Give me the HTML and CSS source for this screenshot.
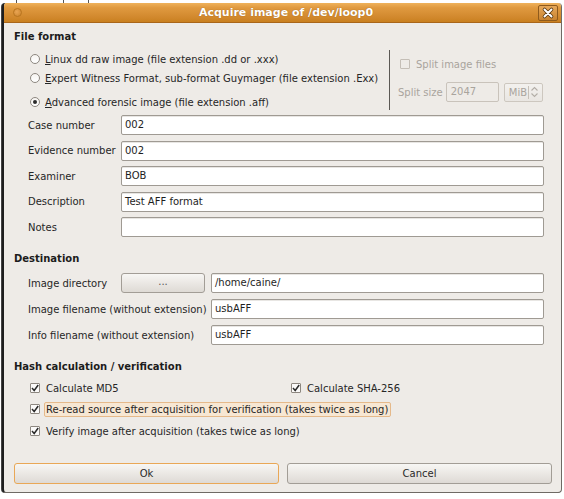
FILE: index.html
```html
<!DOCTYPE html>
<html>
<head>
<meta charset="utf-8">
<link rel="stylesheet" href="styles.css">
</head>
<body>
<div class="desk-top"><span class="tick t1"></span><span class="tick t2"></span><span class="tick t3"></span></div>
<div class="window">
  <div class="titlebar">
    <span class="dot"></span>
    <span class="title">Acquire image of /dev/loop0</span>
    <span class="close">
      <svg width="20" height="16" viewBox="0 0 20 16">
        <path d="M6.5 4.5 L13.5 11.5 M13.5 4.5 L6.5 11.5" stroke="#5a3a12" stroke-width="3.6" stroke-linecap="round"/>
        <path d="M6.5 4.5 L13.5 11.5 M13.5 4.5 L6.5 11.5" stroke="#ffffff" stroke-width="2" stroke-linecap="round"/>
      </svg>
    </span>
  </div>
  <div class="content">
    <div class="heading h-file">File format</div>
    <div class="format">
      <div class="radios">
        <div class="radio r1"><span class="rb"></span><span><u>L</u>inux dd raw image (file extension .dd or .xxx)</span></div>
        <div class="radio r2"><span class="rb"></span><span><u>E</u>xpert Witness Format, sub-format Guymager (file extension .Exx)</span></div>
        <div class="radio r3"><span class="rb on"></span><span><u>A</u>dvanced forensic image (file extension .aff)</span></div>
      </div>
      <div class="vsep"></div>
      <div class="split">
        <div class="split-check"><span class="cb disabled"></span><span>Split image files</span></div>
        <div class="split-size">
          <span>Split size</span>
          <span class="dis-input">2047</span>
          <span class="combo"><span class="combo-text">MiB</span><span class="combo-sep"></span>
            <svg width="9" height="12" viewBox="0 0 9 12"><path d="M1.5 4.5 L4.5 1.5 L7.5 4.5 M1.5 7.5 L4.5 10.5 L7.5 7.5" fill="none" stroke="#b3aea7" stroke-width="1.1"/></svg>
          </span>
        </div>
      </div>
    </div>
    <div class="fields">
      <span class="lbl">Case number</span><span class="input">002</span>
      <span class="lbl">Evidence number</span><span class="input">002</span>
      <span class="lbl">Examiner</span><span class="input">BOB</span>
      <span class="lbl">Description</span><span class="input">Test AFF format</span>
      <span class="lbl">Notes</span><span class="input"></span>
    </div>
    <div class="heading h-dest">Destination</div>
    <div class="dest">
      <div class="dest-row">
        <span class="dlbl-short">Image directory</span>
        <span class="btn small">...</span>
        <span class="input grow">/home/caine/</span>
      </div>
      <div class="dest-row">
        <span class="dlbl">Image filename (without extension)</span>
        <span class="input grow">usbAFF</span>
      </div>
      <div class="dest-row">
        <span class="dlbl">Info filename (without extension)</span>
        <span class="input grow">usbAFF</span>
      </div>
    </div>
    <div class="heading h-hash">Hash calculation / verification</div>
    <div class="hash">
      <div class="check"><span class="cb on"><svg width="10" height="10" viewBox="0 0 10 10"><path d="M2 5 L4.2 7.5 L8.2 2" fill="none" stroke="#2a2a2a" stroke-width="1.5"/></svg></span><span>Calculate MD5</span></div>
      <div class="check col2"><span class="cb on"><svg width="10" height="10" viewBox="0 0 10 10"><path d="M2 5 L4.2 7.5 L8.2 2" fill="none" stroke="#2a2a2a" stroke-width="1.5"/></svg></span><span>Calculate SHA-256</span></div>
      <div class="check wide r-reread"><span class="cb on"><svg width="10" height="10" viewBox="0 0 10 10"><path d="M2 5 L4.2 7.5 L8.2 2" fill="none" stroke="#2a2a2a" stroke-width="1.5"/></svg></span><span class="focus">Re-read source after acquisition for verification (takes twice as long)</span></div>
      <div class="check wide r-verify"><span class="cb on"><svg width="10" height="10" viewBox="0 0 10 10"><path d="M2 5 L4.2 7.5 L8.2 2" fill="none" stroke="#2a2a2a" stroke-width="1.5"/></svg></span><span>Verify image after acquisition (takes twice as long)</span></div>
    </div>
    <div class="buttons">
      <span class="btn big default">Ok</span>
      <span class="btn big">Cancel</span>
    </div>
  </div>
</div>
</body>
</html>
```

FILE: styles.css
```css
html, body {
  margin: 0;
  padding: 0;
  background: #ffffff;
}
body {
  width: 564px;
  height: 499px;
  overflow: hidden;
  font-family: "DejaVu Sans", sans-serif;
  font-size: 10px;
  color: #262626;
}
.desk-top {
  height: 3px;
  display: flex;
}
.tick {
  width: 1px;
  height: 3px;
  background: #555;
}
.t1 { margin-left: 16px; }
.t2 { margin-left: 46px; }
.t3 { margin-left: 24px; }

.window {
  margin-left: 2px;
  width: 557px;
  height: 489px;
  border: 1px solid #6f6a64;
  border-left: 2px solid #1e1e1e;
  border-top: none;
  border-radius: 4px;
  background: #eeebe7;
  overflow: hidden;
  box-shadow: -1px 0 0 #444;
}
.titlebar {
  height: 20px;
  display: flex;
  align-items: center;
  background: linear-gradient(#efb25c 0%, #e09a40 25%, #d38a2f 70%, #c98020 100%);
  border-bottom: 1px solid #a9661a;
  box-sizing: border-box;
  padding: 0 2px 0 9px;
}
.dot {
  width: 9px;
  height: 9px;
  border-radius: 50%;
  background: radial-gradient(circle at 40% 40%, #e9a554, #c9812a);
  border: 1px solid #b8751f;
  box-sizing: border-box;
}
.title {
  flex: 1;
  text-align: center;
  font-weight: bold;
  color: #ffffff;
  text-shadow: 0 0 1px #8a5312;
  font-size: 11px;
  margin-left: 12px;
}
.close {
  width: 20px;
  height: 16px;
  border: 1px solid #8e5a1c;
  border-radius: 2px;
  background: linear-gradient(#e6a85a, #c9832f);
  box-sizing: border-box;
  display: flex;
  align-items: center;
  justify-content: center;
  margin-right: 1px;
}
.close svg { display: block; margin: -1px; }

.content {
  padding: 6px 9px 0 10px;
}
.heading {
  font-weight: bold;
  line-height: 16px;
  height: 16px;
  color: #1c1c1c;
}
.format {
  display: flex;
  height: 65px;
  white-space: nowrap;
}
.radios {
  flex: none;
  width: 359px;
  padding-left: 16px;
}
.radio {
  display: flex;
  align-items: center;
  height: 16px;
  gap: 5px;
}
.r1 { margin-top: 6px; }
.r2 { margin-top: 3px; }
.r3 { margin-top: 8px; }
.rb {
  width: 10px;
  height: 10px;
  border-radius: 50%;
  border: 1px solid #8d8780;
  background: linear-gradient(#f6f4f1, #ffffff);
  box-sizing: border-box;
  display: flex;
  align-items: center;
  justify-content: center;
}
.rb.on::after {
  content: "";
  width: 4px;
  height: 4px;
  border-radius: 50%;
  background: #2b2b2b;
}
u { text-decoration: underline; text-underline-offset: 1px; }
.vsep {
  flex: none;
  width: 1px;
  background: #5b5854;
  margin-top: 5px;
  height: 60px;
}
.split {
  flex: none;
  width: 160px;
  padding-left: 8px;
  color: #a9a49d;
}
.split-check {
  display: flex;
  align-items: center;
  gap: 6px;
  height: 16px;
  margin-top: 11px;
  padding-left: 2px;
}
.split-size {
  display: flex;
  align-items: center;
  margin-top: 10px;
  height: 20px;
}
.dis-input {
  width: 53px;
  height: 20px;
  box-sizing: border-box;
  border: 1px solid #c9c3bb;
  border-radius: 2px;
  margin-left: 3px;
  padding-left: 4px;
  line-height: 18px;
}
.combo {
  width: 39px;
  height: 19px;
  box-sizing: border-box;
  border: 1px solid #cdc7bf;
  border-radius: 2px;
  margin-left: 5px;
  display: flex;
  align-items: center;
  padding-left: 4px;
  background: linear-gradient(#f3f1ee, #e9e6e2);
}
.combo-sep {
  width: 1px;
  height: 13px;
  background: #c6c0b8;
  margin: 0 1px;
}
.cb {
  width: 10px;
  height: 10px;
  border: 1px solid #8d8780;
  border-radius: 1px;
  box-sizing: border-box;
  background: #fbfaf9;
  display: flex;
  align-items: center;
  justify-content: center;
  flex: none;
}
.cb svg { display: block; flex: none; }
.cb.disabled {
  border-color: #c4beb6;
  background: #eeebe7;
}
.fields {
  margin-top: 5px;
  margin-left: 14px;
  margin-right: 8px;
  display: grid;
  grid-template-columns: 93px 1fr;
  row-gap: 5.5px;
  align-items: center;
}
.input {
  height: 20px;
  box-sizing: border-box;
  border: 1px solid #9f9a93;
  border-radius: 2px;
  background: #ffffff;
  padding-left: 3px;
  line-height: 18px;
  color: #1e1e1e;
  box-shadow: inset 0 1px 0 #e8e6e3;
}
.h-dest { margin-top: 14px; }
.dest {
  margin-top: 6px;
  margin-left: 14px;
  margin-right: 8px;
  display: flex;
  flex-direction: column;
  gap: 6px;
}
.dest-row {
  display: flex;
  align-items: center;
}
.dlbl-short { width: 93px; }
.dlbl { width: 183px; }
.grow { flex: 1; }
.btn {
  box-sizing: border-box;
  border: 1px solid #a29d96;
  border-radius: 3px;
  background: linear-gradient(#f7f6f4, #ebe8e4 50%, #dedad5);
  text-align: center;
  color: #2a2a2a;
}
.btn.small {
  width: 84px;
  height: 20px;
  line-height: 16px;
  margin-right: 6px;
  color: #555;
}
.h-hash { margin-top: 14px; }
.hash {
  margin-top: 5px;
  margin-left: 16px;
  display: grid;
  grid-template-columns: 261px 1fr;
  row-gap: 5px;
}
.check {
  display: flex;
  align-items: center;
  height: 16px;
  gap: 6px;
}
.check.wide { grid-column: 1 / 3; }
.r-verify { margin-top: 1px; }
.focus {
  margin-left: -2px;
  padding: 0 2px 0 1px;
  height: 15px;
  line-height: 14px;
  box-sizing: border-box;
  border: 1px solid #e5b98a;
  border-radius: 2px;
  background: #f7e7d3;
}
.buttons {
  margin-top: 24px;
  display: flex;
  gap: 8px;
}
.btn.big {
  flex: 1;
  height: 21px;
  line-height: 19px;
}
.btn.default {
  border-color: #e9a756;
}
```
